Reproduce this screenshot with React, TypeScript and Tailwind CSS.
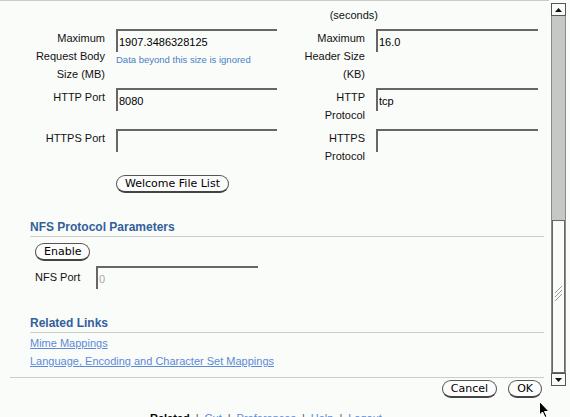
import React from 'react'

const sans = "font-['Liberation_Sans',Arial,sans-serif]"
const btnFont = "font-['DejaVu_Sans',sans-serif]"

function Field({ value, placeholder, width = 'w-[161px]' }: { value?: string; placeholder?: string; width?: string }) {
  return (
    <input
      readOnly
      value={value ?? ''}
      placeholder={placeholder}
      className={`${width} block h-[23px] border-t-2 border-l-2 border-[#666] bg-transparent pl-[1px] text-[11px] text-black placeholder:text-[#aaa] outline-none ${sans}`}
    />
  )
}

function Pill({ children }: { children: React.ReactNode }) {
  return (
    <button className={`block h-[18px] rounded-full border border-[#555] border-b-2 border-b-[#444] bg-[#fcfcfc] px-[8px] text-[11px] leading-[14px] text-black ${btnFont}`}>
      {children}
    </button>
  )
}

function Label({ lines, w }: { lines: string[]; w: string }) {
  return (
    <div className={`${w} ml-auto text-right text-[11px] leading-[18px] text-[#111]`}>
      {lines.map((l, i) => <div key={i}>{l}</div>)}
    </div>
  )
}

function SectionHead({ title }: { title: string }) {
  return (
    <div className="h-[18px] border-b border-[#cbcccb] text-[12px] font-bold leading-[16px] text-[#32609a]">{title}</div>
  )
}

function Scrollbar() {
  return (
    <div className="flex w-[15px] flex-col pt-[3px] pb-[1px]">
      <div className="flex h-[13px] items-center justify-center border border-[#555] bg-[#fafafa]">
        <svg width="7" height="4" viewBox="0 0 7 4"><path d="M3.5 0 L7 4 L0 4 Z" fill="#111" /></svg>
      </div>
      <div className="flex flex-1 flex-col border-x border-[#8a8a8a] bg-[#c6c8c6]">
        <div className="h-[204px]" />
        <div className="flex h-[153px] items-center justify-center border border-[#666] bg-[#fafcfa]">
          <svg width="9" height="16" viewBox="0 0 9 16" className="-mt-[6px]">
            <path d="M1 7 L8 0 M1 11 L8 4 M1 15 L8 8" stroke="#999" strokeWidth="1" />
          </svg>
        </div>
        <div className="flex-1" />
      </div>
      <div className="flex h-[13px] items-center justify-center border border-[#555] bg-[#fafafa]">
        <svg width="7" height="4" viewBox="0 0 7 4"><path d="M0 0 L7 0 L3.5 4 Z" fill="#111" /></svg>
      </div>
    </div>
  )
}

export default function App() {
  return (
    <div className={`relative flex h-[417px] w-[570px] overflow-hidden bg-[#fafcfa] ${sans}`}>
      <div className="w-[549px] shrink-0">
        <div className="border-t border-[#c9cbc9] pr-[5px]">
          <div className="grid grid-cols-[105px_161px_77px_162px] gap-x-[11px] gap-y-[5px] pt-[5px]">
            <div />
            <div />
            <Label w="w-[90px]" lines={['(seconds)']} />
            <div />

            <Label w="w-[72px]" lines={['Maximum', 'Request Body', 'Size (MB)']} />
            <div>
              <Field value="1907.3486328125" />
              <div className="mt-[1px] text-[9.5px] leading-[14px] text-[#4a80c4]">Data beyond this size is ignored</div>
            </div>
            <Label w="w-[62px]" lines={['Maximum', 'Header Size', '(KB)']} />
            <Field value="16.0" width="w-[162px]" />

            <Label w="w-[72px]" lines={['HTTP Port']} />
            <Field value="8080" />
            <Label w="w-[62px]" lines={['HTTP', 'Protocol']} />
            <Field value="tcp" width="w-[162px]" />

            <Label w="w-[72px]" lines={['HTTPS Port']} />
            <Field />
            <Label w="w-[62px]" lines={['HTTPS', 'Protocol']} />
            <Field width="w-[162px]" />
          </div>

          <div className="mt-[10px] flex pl-[116px]">
            <Pill>Welcome File List</Pill>
          </div>

          <div className="mt-[26px] pl-[30px]">
            <SectionHead title="NFS Protocol Parameters" />
            <div className="mt-[6px] flex pl-[5px]">
              <Pill>Enable</Pill>
            </div>
            <div className="mt-[5px] flex items-center pl-[5px]">
              <span className="w-[61px] text-[11px] text-[#111]">NFS Port</span>
              <Field placeholder="0" width="w-[162px]" />
            </div>

            <div className="mt-[26px]">
              <SectionHead title="Related Links" />
              <div className="mt-[1px] flex flex-col items-start text-[11px] leading-[18px] text-[#5c8ad8]">
                <a className="underline">Mime Mappings</a>
                <a className="underline">Language, Encoding and Character Set Mappings</a>
              </div>
            </div>
          </div>

          <div className="ml-[10px] mt-[7px] border-t border-[#cbcccb]" />
          <div className="mt-[2px] flex justify-end gap-[11px] pr-[2px]">
            <Pill>Cancel</Pill>
            <Pill>OK</Pill>
          </div>
          <div className="mt-[11px] flex gap-[6px] pl-[150px] text-[11px] leading-[18px]">
            <span className="font-bold text-black">Related</span>
            <span className="text-[#555]">|</span>
            <span className="text-[#5c8ad8]">Cut</span>
            <span className="text-[#555]">|</span>
            <span className="text-[#5c8ad8]">Preferences</span>
            <span className="text-[#555]">|</span>
            <span className="text-[#5c8ad8]">Help</span>
            <span className="text-[#555]">|</span>
            <span className="text-[#5c8ad8]">Logout</span>
          </div>
        </div>
      </div>
      <div className="ml-[2px]">
        <Scrollbar />
      </div>
      <svg className="absolute left-[539px] top-[401px]" width="11" height="17" viewBox="0 0 11 17">
        <path d="M0.5 0.5 L0.5 14 L3.5 11 L6 16.5 L8 15.5 L5.5 10.5 L10 10.5 Z" fill="#000" stroke="#fff" strokeWidth="1" />
      </svg>
    </div>
  )
}
